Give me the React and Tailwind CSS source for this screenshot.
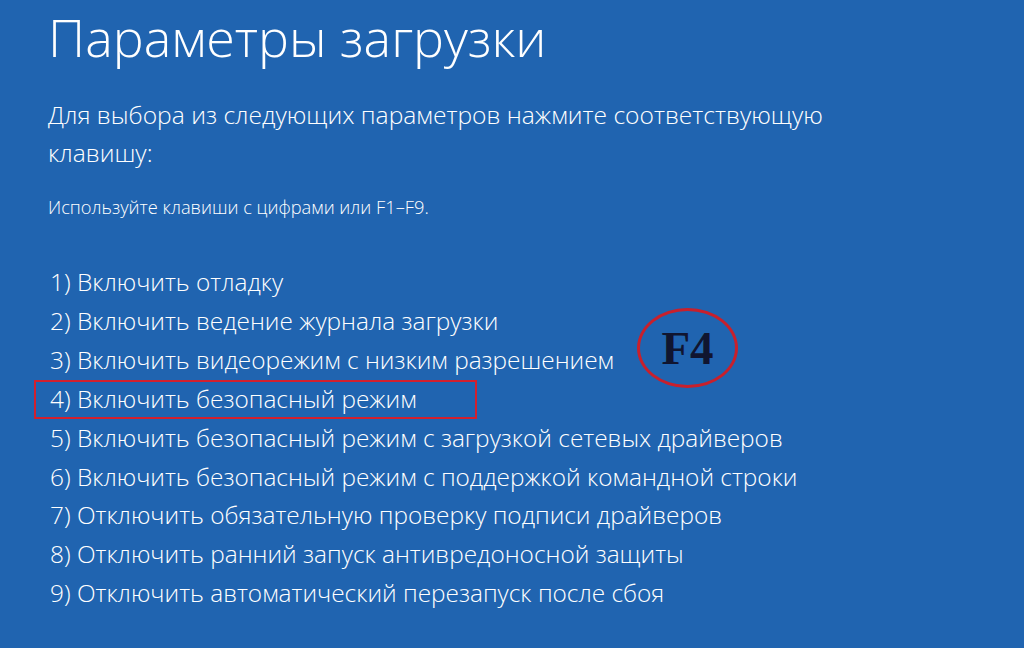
const items = [
  "1) Включить отладку",
  "2) Включить ведение журнала загрузки",
  "3) Включить видеорежим с низким разрешением",
  "4) Включить безопасный режим",
  "5) Включить безопасный режим с загрузкой сетевых драйверов",
  "6) Включить безопасный режим с поддержкой командной строки",
  "7) Отключить обязательную проверку подписи драйверов",
  "8) Отключить ранний запуск антивредоносной защиты",
  "9) Отключить автоматический перезапуск после сбоя",
];

export default function App() {
  return (
    <div
      className="relative w-[1024px] h-[648px] overflow-hidden bg-[#2064b0] text-white pl-[48px] pt-[11px]"
      style={{ fontFamily: '"Open Sans", "Noto Sans", sans-serif' }}
    >
      <h1 className="text-[52px] leading-[52px] font-light">Параметры загрузки</h1>

      <p className="mt-[33px] text-[24.6px] leading-[38px] font-light w-[800px]">
        Для выбора из следующих параметров нажмите соответствующую клавишу:
      </p>

      <p className="mt-[25px] text-[18.3px] leading-[20px] font-light">Используйте клавиши с цифрами или F1–F9.</p>

      <ul className="mt-[46px] pl-[2px]">
        {items.map((t, i) => (
          <li key={i} className="relative text-[24.4px] leading-[38.9px] font-light">
            {t}
            {i === 3 && (
              <span className="absolute left-[-16px] top-0 w-[443px] h-[39px] border-2 border-[#d3202e]" />
            )}
          </li>
        ))}
      </ul>

      {/* F4 annotation */}
      <div className="absolute left-[637px] top-[308px] w-[101px] h-[80px] rounded-[50%] border-[3px] border-[#c8202c] flex items-center justify-center">
        <span
          className="text-[47px] font-bold text-[#101530] leading-none"
          style={{ fontFamily: '"Liberation Serif", "DejaVu Serif", serif' }}
        >
          F4
        </span>
      </div>
    </div>
  );
}
